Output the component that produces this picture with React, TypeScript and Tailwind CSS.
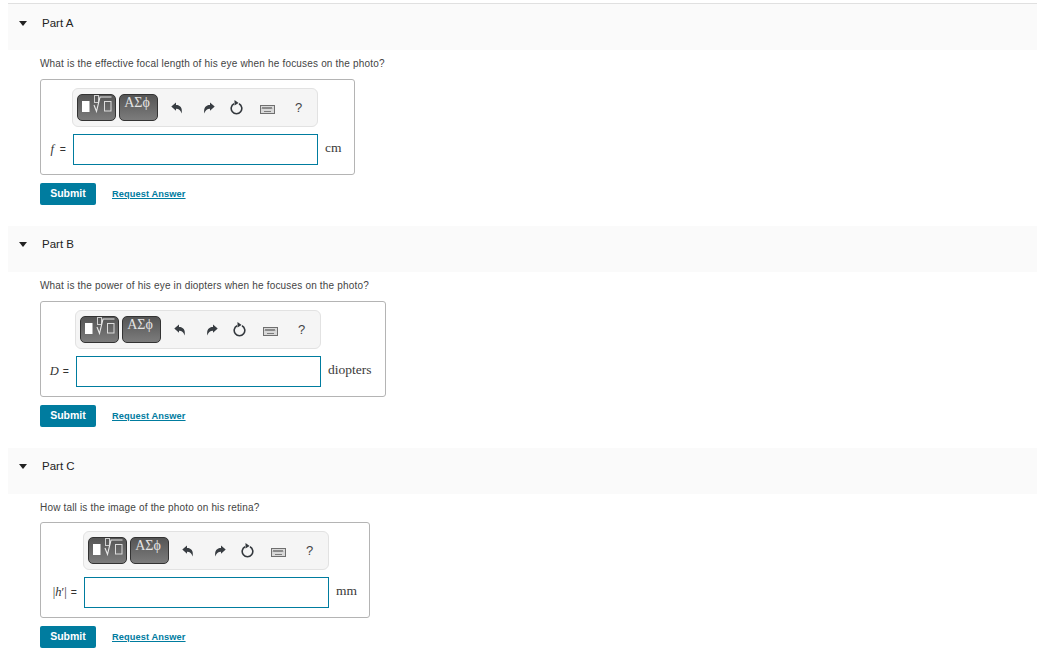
/**
 * Homework parts page: three collapsible parts, each with a math answer box.
 */

type Part = {
  title: string;
  titlePad: string;
  question: string;
  label: React.ReactNode;
  labelWidth: string;
  toolbarIndent: string;
  unit: string;
  boxWidth: string;
  boxGap: string;
  submitGap: string;
};

const PARTS: Part[] = [
  {
    title: 'Part A',
    titlePad: 'pt-[12px]',
    question: 'What is the effective focal length of his eye when he focuses on the photo?',
    label: <i className="mr-[2px]">f</i>,
    labelWidth: 'w-[32px]',
    toolbarIndent: 'ml-[31px]',
    unit: 'cm',
    boxWidth: 'w-[315px]',
    boxGap: 'mt-[9px]',
    submitGap: 'mt-[8px]',
  },
  {
    title: 'Part B',
    titlePad: 'pt-[11px]',
    question: 'What is the power of his eye in diopters when he focuses on the photo?',
    label: <i>D</i>,
    labelWidth: 'w-[35px]',
    toolbarIndent: 'ml-[34px]',
    unit: 'diopters',
    boxWidth: 'w-[346px]',
    boxGap: 'mt-[9px]',
    submitGap: 'mt-[8px]',
  },
  {
    title: 'Part C',
    titlePad: 'pt-[11px]',
    question: 'How tall is the image of the photo on his retina?',
    label: (
      <>
        |<i>h</i>′|
      </>
    ),
    labelWidth: 'w-[43px]',
    toolbarIndent: 'ml-[42px]',
    unit: 'mm',
    boxWidth: 'w-[330px]',
    boxGap: 'mt-[8px]',
    submitGap: 'mt-[8px]',
  },
];

function TemplateIcon() {
  return (
    <svg width="37" height="25" viewBox="0 0 37 25" fill="none">
      <rect x="4" y="6" width="7.5" height="11" fill="#fff" />
      <rect x="16.5" y="0.5" width="4" height="7" stroke="#d0d0d0" />
      <path d="M16 10l2.5 6.5L22 2h11.5" stroke="#e8e8e8" strokeWidth="1.1" />
      <rect x="26.5" y="6.5" width="6.5" height="9.5" stroke="#dcdcdc" />
    </svg>
  );
}

function ArrowIcon({ flip }: { flip?: boolean }) {
  return (
    <svg width="12" height="12" viewBox="0 0 12 12" className={flip ? '-scale-x-100' : ''}>
      <path d="M0.3 4.6 5 0.6V3C9 3 11.8 5.6 10.6 11.6 9.8 8.4 8 6.8 5 6.8V8.8Z" fill="#383d42" />
    </svg>
  );
}

function ResetIcon() {
  return (
    <svg width="13" height="15" viewBox="0 0 13 15" fill="none">
      <path d="M4 3.8A5.3 5.3 0 1 0 9 3.8" stroke="#33383d" strokeWidth="1.6" />
      <path d="M4.5 0 8.6 2.9 4.5 5.6Z" fill="#33383d" />
    </svg>
  );
}

function KeyboardIcon() {
  return (
    <svg width="15" height="9" viewBox="0 0 15 9" fill="none">
      <rect x="0.5" y="0.5" width="14" height="8" fill="#d8d8d8" stroke="#6f6f6f" />
      <path d="M2 4l1-2 1 2 1-2 1 2 1-2 1 2 1-2 1 2 1-2 1 2" stroke="#666" strokeWidth="0.8" />
      <path d="M4 6.5h7" stroke="#7c7c7c" />
    </svg>
  );
}

function Toolbar() {
  return (
    <div className="flex h-[39px] w-[246px] items-center rounded-md border border-[#e2e2e2] bg-[#f5f5f5] pl-[4px]">
      <button className="flex h-[27px] w-[39px] items-center justify-center rounded-[5px] border border-[#333] bg-linear-to-b from-[#555] to-[#7c7c7c]">
        <TemplateIcon />
      </button>
      <button className="ml-[3px] flex h-[27px] w-[39px] items-start justify-center rounded-[5px] border border-[#333] bg-linear-to-b from-[#555] to-[#7c7c7c] pr-[3px] font-['Liberation_Serif',serif] text-[14px] leading-[16px] text-[#e4e4e4]">
        ΑΣϕ
      </button>
      <div className="ml-[13px] flex items-center">
        <span className="flex w-[12px]"><ArrowIcon /></span>
        <span className="ml-[20px] flex w-[12px]"><ArrowIcon flip /></span>
        <span className="ml-[15px] flex w-[13px]"><ResetIcon /></span>
        <span className="ml-[17px] mt-[3px] flex w-[15px]"><KeyboardIcon /></span>
        <span className="ml-[20px] font-['Liberation_Sans',sans-serif] text-[13px] text-[#444]">?</span>
      </div>
    </div>
  );
}

function PartSection({ part }: { part: Part }) {
  return (
    <section>
      <header className={`ml-[8px] flex h-[46px] bg-[#fafafa] ${part.titlePad}`}>
        <span className="ml-[11px] mt-[5px] h-0 w-0 border-x-[4px] border-t-[5px] border-x-transparent border-t-[#222]" />
        <h2 className="ml-[15px] text-[11.5px] leading-[14px] text-[#222]">{part.title}</h2>
      </header>

      <div className="ml-[40px]">
        <p className="mt-[7px] text-[10px] leading-[13px] tracking-[0.18px] text-[#444]">{part.question}</p>

        <div className={`h-[96px] rounded-[3px] border border-[#b4b4b4] pt-[8px] ${part.boxGap} ${part.boxWidth}`}>
          <div className={`flex ${part.toolbarIndent}`}>
            <Toolbar />
          </div>
          <div className="mt-[7px] flex items-center">
            <span className={`flex items-baseline justify-end pr-[7px] font-['Liberation_Serif',serif] text-[12.5px] text-[#333] ${part.labelWidth}`}>
              {part.label}
              <span className="ml-[4px] font-['Liberation_Sans',sans-serif] text-[10.5px]">=</span>
            </span>
            <input className="h-[31px] w-[245px] border border-[#007c9f] bg-white outline-none" />
            <span className="mb-[2px] ml-[7px] font-['Liberation_Serif',serif] text-[13.5px] text-[#3a3a3a]">{part.unit}</span>
          </div>
        </div>

        <div className={`flex items-center ${part.submitGap}`}>
          <button className="h-[22px] w-[56px] rounded-[2px] bg-[#007c9f] text-[10.5px] font-bold text-white">Submit</button>
          <a href="#" className="ml-[16px] mt-[1px] text-[9.25px] font-bold tracking-[0.1px] text-[#007c9f] underline">Request Answer</a>
        </div>
      </div>
    </section>
  );
}

export default function App() {
  return (
    <div className="h-[658px] w-[1037px] overflow-hidden bg-white pt-[3px] font-['Liberation_Sans',sans-serif]">
      <div className="ml-[8px] h-px bg-[#e0e0e0]" />
      <div className="flex flex-col gap-[21px]">
        {PARTS.map((part) => (
          <PartSection key={part.title} part={part} />
        ))}
      </div>
    </div>
  );
}
